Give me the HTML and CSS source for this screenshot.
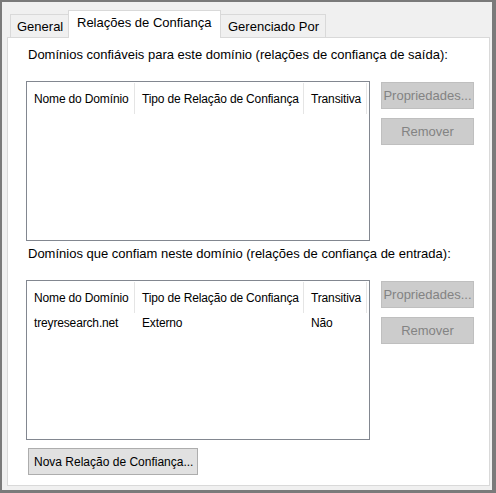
FILE: index.html
```html
<!DOCTYPE html>
<html>
<head>
<meta charset="utf-8">
<link rel="stylesheet" href="styles.css">
</head>
<body>
<div class="dialog">
  <div class="tabs">
    <div class="tab t1">General</div>
    <div class="tab active">Relações de Confiança</div>
    <div class="tab t3">Gerenciado Por</div>
  </div>
  <div class="panel">
    <div class="label">Domínios confiáveis para este domínio (relações de confiança de saída):</div>
    <div class="group">
      <div class="list">
        <div class="row head">
          <div class="c1">Nome do Domínio</div>
          <div class="c2">Tipo de Relação de Confiança</div>
          <div class="c3">Transitiva</div>
        </div>
      </div>
      <div class="buttons">
        <div class="btn disabled">Propriedades...</div>
        <div class="btn disabled">Remover</div>
      </div>
    </div>
    <div class="label second">Domínios que confiam neste domínio (relações de confiança de entrada):</div>
    <div class="group">
      <div class="list">
        <div class="row head">
          <div class="c1">Nome do Domínio</div>
          <div class="c2">Tipo de Relação de Confiança</div>
          <div class="c3">Transitiva</div>
        </div>
        <div class="row item">
          <div class="c1">treyresearch.net</div>
          <div class="c2">Externo</div>
          <div class="c3">Não</div>
        </div>
      </div>
      <div class="buttons">
        <div class="btn disabled">Propriedades...</div>
        <div class="btn disabled">Remover</div>
      </div>
    </div>
    <div class="footer">
      <div class="btn normal">Nova Relação de Confiança...</div>
    </div>
  </div>
</div>
</body>
</html>
```
FILE: styles.css
```css
* { box-sizing: border-box; }
html, body { margin: 0; padding: 0; }
body {
  font-family: "Liberation Sans", Arial, sans-serif;
  font-size: 12px;
  color: #000;
  background: #7a7a7a;
}
.dialog {
  width: 496px;
  height: 493px;
  border-style: solid;
  border-color: #7a7a7a;
  border-width: 2px 4px 3px 2px;
  background: #f0f0f0;
  padding: 7px 0 0 5px;
  display: flex;
  flex-direction: column;
}
.tabs {
  display: flex;
  align-items: flex-end;
  padding-left: 3px;
  height: 28px;
  position: relative;
  z-index: 1;
}
.tab {
  height: 23px;
  border: 1px solid #d9d9d9;
  border-bottom: none;
  background: #f0f0f0;
  display: flex;
  align-items: center;
  font-size: 13px;
  padding-top: 1px;
}
.t1 { width: 59px; padding-left: 6px; margin-right: -1px; }
.t3 { width: 106px; padding-left: 7px; margin-left: -1px; }
.tab.active {
  height: 28px;
  width: 153px;
  background: #fff;
  margin-bottom: -1px;
  padding: 0 0 5px 8px;
  position: relative;
  z-index: 2;
}
.panel {
  width: 483px;
  height: 449px;
  background: #fff;
  border: 1px solid #d9d9d9;
  padding: 9px 0 0 18px;
  display: flex;
  flex-direction: column;
}
.label {
  font-size: 13px;
  height: 16px;
  line-height: 16px;
  margin-left: 2px;
}
.label.second { margin-top: 5px; }
.group {
  display: flex;
  margin-top: 18px;
}
.list {
  width: 344px;
  height: 160px;
  border: 1px solid #828790;
  background: #fff;
}
.row {
  display: flex;
  font-size: 12px;
  letter-spacing: -0.15px;
}
.row > div {
  padding-left: 7px;
  white-space: nowrap;
  overflow: hidden;
}
.c1 { width: 108px; }
.c2 { width: 169px; }
.c3 { width: 63px; }
.head {
  height: 31px;
  margin-top: 1px;
}
.head > div {
  display: flex;
  align-items: center;
  border-right: 1px solid #e5e5e5;
}
.item {
  height: 20px;
  align-items: center;
}
.buttons {
  display: flex;
  flex-direction: column;
  gap: 9px;
  margin-left: 11px;
  margin-top: 1px;
}
.btn {
  height: 27px;
  width: 93px;
  display: flex;
  align-items: center;
  justify-content: center;
  font-size: 13px;
  border: 1px solid #bfbfbf;
}
.btn.disabled {
  background: #cccccc;
  color: #838383;
}
.btn.normal {
  background: #e1e1e1;
  border-color: #adadad;
  width: 170px;
  font-size: 12px;
  justify-content: flex-start;
  padding-left: 5px;
}
.footer {
  margin-top: 8px;
  margin-left: 2px;
}
```
